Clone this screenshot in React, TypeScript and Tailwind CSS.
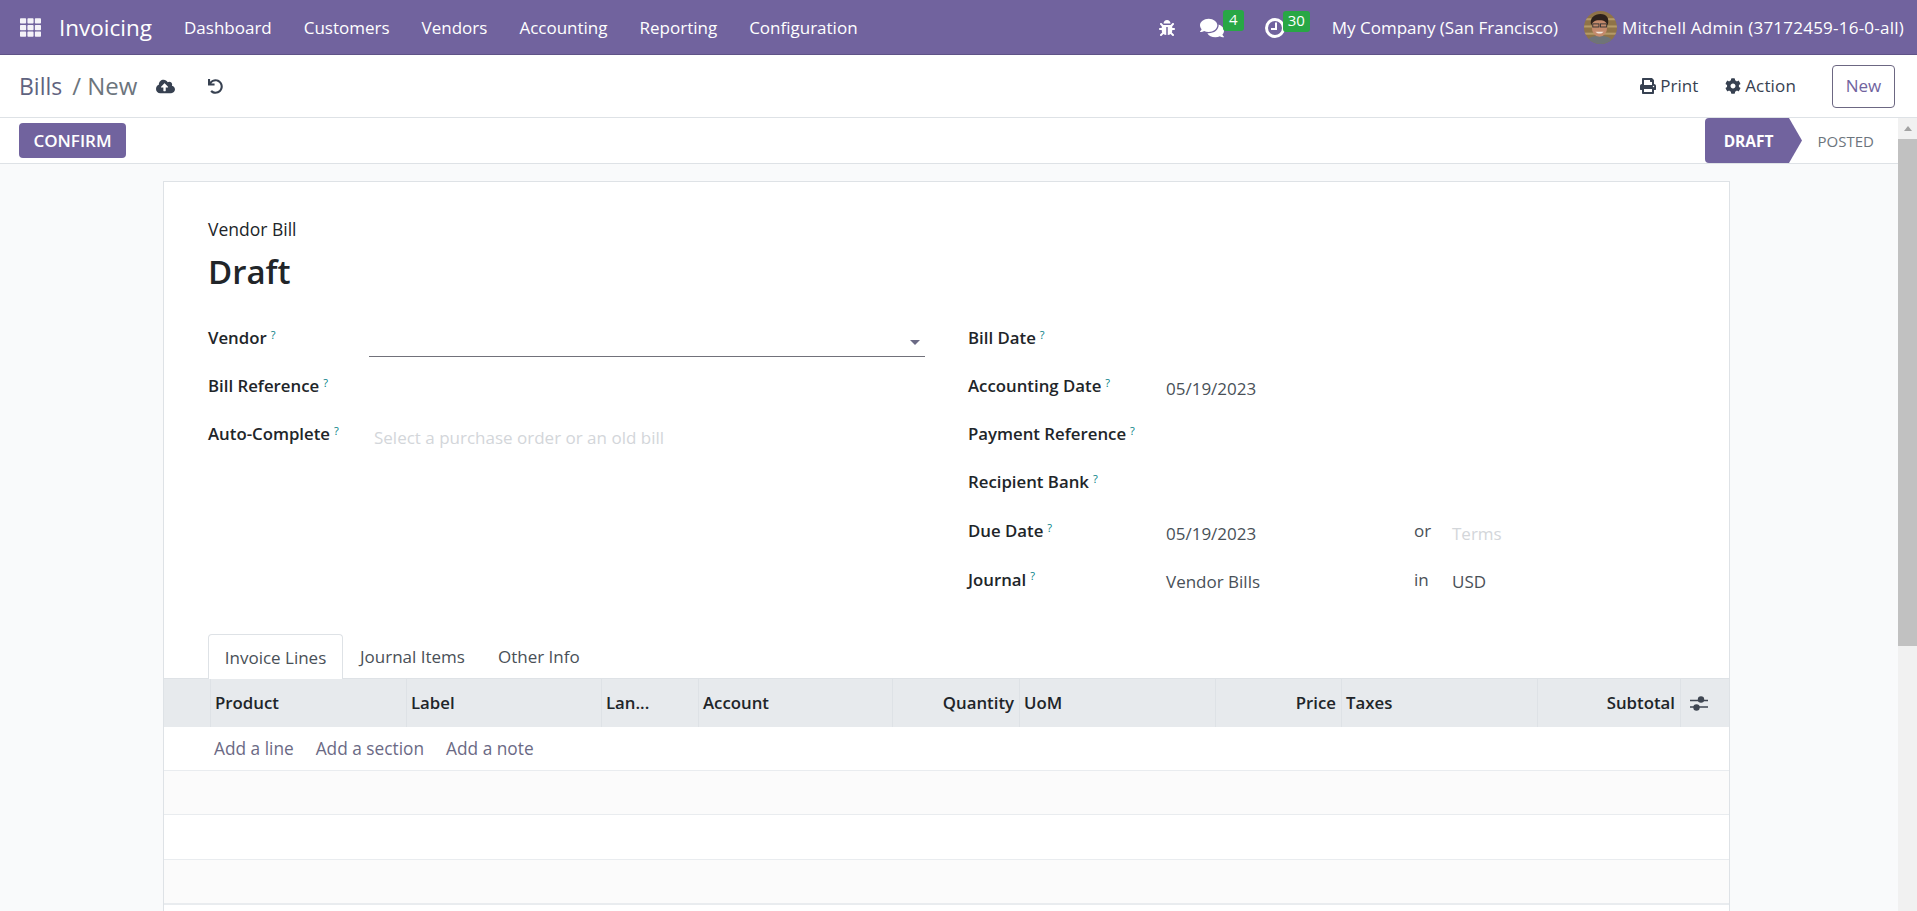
import { FaBug, FaCloudUploadAlt, FaCog, FaComments, FaPrint, FaTh, FaUndo } from "react-icons/fa";

const menu = ["Dashboard", "Customers", "Vendors", "Accounting", "Reporting", "Configuration"];

const columns = [
  ["", ""],
  ["Product", ""],
  ["Label", ""],
  ["Lan...", ""],
  ["Account", ""],
  ["Quantity", "r"],
  ["UoM", ""],
  ["Price", "r"],
  ["Taxes", ""],
  ["Subtotal", "r"],
];

function Avatar() {
  return (
    <svg viewBox="0 0 32 32" className="w-[33px] h-[33px] rounded-full shrink-0">
      <rect width="32" height="32" fill="#8f7347" />
      <rect x="0" y="7" width="32" height="2" fill="#b59a68" />
      <rect x="0" y="14" width="32" height="2" fill="#b59a68" />
      <rect x="0" y="21" width="32" height="2" fill="#b59a68" />
      <path d="M2 32c1-6 6-8 13-8s13 2 14 8z" fill="#6f7478" />
      <ellipse cx="15" cy="15.5" rx="7.5" ry="9.5" fill="#c48a6c" />
      <path d="M7 14C5 7 10 3 16 3s9 4 7 11c-1-3-3-5-8-5s-7 2-8 5z" fill="#2d211b" />
      <rect x="8.5" y="12.5" width="6" height="3" fill="none" stroke="#333" strokeWidth="0.9" />
      <rect x="16" y="12.5" width="6" height="3" fill="none" stroke="#333" strokeWidth="0.9" />
      <path d="M11 20c2.5 2.5 6 2.5 8 0z" fill="#f3e7df" />
    </svg>
  );
}

function Hint() {
  return <sup className="ml-[4px] text-[11px] font-normal text-[#017e84]">?</sup>;
}

function Label({ text, width }: { text: string; width: string }) {
  return (
    <div className={`${width} shrink-0 font-semibold text-[16.8px] text-[#212529]`}>
      {text}
      <Hint />
    </div>
  );
}

export default function App() {
  return (
    <div className="w-[1917px] h-[911px] overflow-hidden flex flex-col bg-[#f9fafb] font-['Open_Sans','Noto_Sans',sans-serif] text-[17px] leading-[24px] text-[#495057]">
      <header className="h-[55px] shrink-0 bg-[#71639e] border-b border-[#5f5387] flex items-center text-white">
        <FaTh className="ml-[20px] w-[21px] h-[21px] text-[#f4f2f8]" />
        <span className="ml-[18px] text-[22.5px] w-[125px] mt-[1px]">Invoicing</span>
        <nav className="flex gap-[32px] mt-[1px]">
          {menu.map((m) => (
            <span key={m}>{m}</span>
          ))}
        </nav>
        <div className="ml-auto flex items-center">
          <FaBug className="w-[16px] h-[16px] mt-[1px]" />
          <div className="relative ml-[25px] mr-[40px]">
            <FaComments className="w-[24px] h-[24px] mt-[2px]" />
            <span className="absolute left-[23px] -top-[4px] w-[21px] h-[21px] rounded-[3px] bg-[#28a745] text-[15px] font-medium leading-[19px] text-center">4</span>
          </div>
          <div className="relative mr-[46px]">
            <svg viewBox="0 0 22 22" className="w-[22px] h-[22px] mt-[2px]">
              <circle cx="11" cy="11" r="8.5" fill="none" stroke="currentColor" strokeWidth="3" />
              <path d="M12 5.5V12H7" fill="none" stroke="currentColor" strokeWidth="2" />
            </svg>
            <span className="absolute left-[19px] -top-[4px] w-[27px] h-[21px] rounded-[3px] bg-[#28a745] text-[15px] font-medium leading-[19px] text-center">30</span>
          </div>
          <span className="mt-[1px]">My Company (San Francisco)</span>
          <div className="ml-[26px] flex items-center gap-[5px] mr-[13px]">
            <Avatar />
            <span className="tracking-[0.23px] mt-[1px]">Mitchell Admin (37172459-16-0-all)</span>
          </div>
        </div>
      </header>

      <div className="h-[63px] shrink-0 bg-white border-b border-[#dee2e6] flex items-center pl-[19px] pr-[22px]">
        <span className="text-[23px] text-[#5f6380]">Bills</span>
        <span className="text-[24px] text-[#6c757d] ml-[10px]">/ New</span>
        <FaCloudUploadAlt className="ml-[19px] w-[19px] h-[19px] text-[#374151]" />
        <FaUndo className="ml-[33px] w-[15px] h-[15px] text-[#374151]" />
        <div className="ml-auto flex items-center text-[#374151]">
          <FaPrint className="w-[16px] h-[16px]" />
          <span className="ml-[4px]">Print</span>
          <FaCog className="ml-[27px] w-[16px] h-[16px]" />
          <span className="ml-[4px] tracking-[0.15px]">Action</span>
          <button className="ml-[36px] w-[63px] h-[43px] rounded-[4px] border border-[#6c6782] bg-white text-[#71639e]">New</button>
        </div>
      </div>

      <div className="flex-1 flex min-h-0">
        <div className="flex-1 min-w-0 flex flex-col">
          <div className="h-[46px] shrink-0 bg-white border-b border-[#dee2e6] flex items-center justify-between pl-[19px]">
            <button className="w-[107px] h-[35px] rounded-[4px] bg-[#71639e] text-white text-[17px] font-semibold">CONFIRM</button>
            <div className="flex items-center h-full self-start">
              <div className="relative h-[45px] w-[84px] pl-[4px] bg-[#71639e] rounded-l-[4px] flex items-center justify-center text-white text-[15.5px] font-bold">
                DRAFT
                <svg viewBox="0 0 13 45" className="absolute left-full top-0 w-[13px] h-[45px]" preserveAspectRatio="none">
                  <path d="M0 0L13 22.5L0 45z" fill="#71639e" />
                </svg>
              </div>
              <span className="ml-[29px] mr-[24px] text-[15px] font-medium text-[#6c757d]">POSTED</span>
            </div>
          </div>

          <main className="flex-1 min-h-0 overflow-hidden pt-[17px] pl-[163px] pr-[168px]">
            <section className="bg-white border border-[#dee2e6] border-b-0 h-[800px]">
              <div className="pt-[35px] pl-[44px] pr-[44px]">
                <div className="h-[24px] font-medium text-[17.5px] text-[#212529]">Vendor Bill</div>
                <h1 className="mt-[6px] h-[50px] text-[33px] leading-[50px] font-semibold text-[#212529]">Draft</h1>
                <div className="mt-[17px] flex">
                  <div className="w-[760px] shrink-0">
                    <div className="flex h-[48px] items-center">
                      <Label text="Vendor" width="w-[161px]" />
                      <div className="relative w-[556px] h-[34px] mt-[4px] border-b border-[#71717a]">
                        <span className="absolute right-[5px] top-[17px] w-0 h-0 border-x-[5px] border-x-transparent border-t-[5px] border-t-[#6b6a85]" />
                      </div>
                    </div>
                    <div className="flex h-[48px] items-center">
                      <Label text="Bill Reference" width="w-[161px]" />
                    </div>
                    <div className="flex h-[48px] items-center">
                      <Label text="Auto-Complete" width="w-[161px]" />
                      <span className="ml-[5px] mt-[7px] text-[#d3d6da]">Select a purchase order or an old bill</span>
                    </div>
                  </div>
                  <div className="flex-1">
                    <div className="flex h-[48px] items-center">
                      <Label text="Bill Date" width="w-[198px]" />
                    </div>
                    <div className="flex h-[48px] items-center">
                      <Label text="Accounting Date" width="w-[198px]" />
                      <span className="mt-[5px]">05/19/2023</span>
                    </div>
                    <div className="flex h-[48px] items-center">
                      <Label text="Payment Reference" width="w-[198px]" />
                    </div>
                    <div className="flex h-[48px] items-center">
                      <Label text="Recipient Bank" width="w-[198px]" />
                    </div>
                    <div className="flex h-[50px] items-center">
                      <Label text="Due Date" width="w-[198px]" />
                      <span className="w-[248px] mt-[6px]">05/19/2023</span>
                      <span className="w-[38px]">or</span>
                      <span className="mt-[6px] text-[#d3d6da]">Terms</span>
                    </div>
                    <div className="flex h-[47px] items-center">
                      <Label text="Journal" width="w-[198px]" />
                      <span className="w-[248px] mt-[4px]">Vendor Bills</span>
                      <span className="w-[38px]">in</span>
                      <span className="mt-[4px]">USD</span>
                    </div>
                  </div>
                </div>
              </div>

              <div className="mt-[31px] pl-[44px] flex h-[45px] relative z-10 -mb-px">
                <div className="w-[135px] h-[45px] pt-[1px] bg-white border border-[#dee2e6] border-b-0 rounded-t-[4px] flex items-center justify-center">Invoice Lines</div>
                <div className="px-[17px] pt-[1px] flex items-center">Journal Items</div>
                <div className="px-[16px] pt-[1px] flex items-center">Other Info</div>
              </div>

              <div className="grid grid-cols-[46px_196px_195px_97px_194px_127px_196px_126px_196px_143px_1fr] h-[49px] bg-[#e7eaed] border-t border-[#dee2e6] font-semibold text-[16.8px] text-[#212529]">
                {columns.map(([name, align], i) => (
                  <div key={i} className={`flex items-center ${i > 0 ? "border-l border-[#dee2e6]" : ""} ${align === "r" ? "justify-end pr-[5px]" : "pl-[4px]"}`}>
                    {name}
                  </div>
                ))}
                <div className="flex items-center justify-center border-l border-[#dee2e6] pr-[12px]">
                  <svg viewBox="0 0 18 15" className="w-[18px] h-[15px] text-[#3f4652]">
                    <path d="M0 4.5H18M0 11H18" stroke="currentColor" strokeWidth="1.6" />
                    <circle cx="11" cy="3.5" r="3.2" fill="currentColor" />
                    <circle cx="6.5" cy="11.5" r="3.2" fill="currentColor" />
                  </svg>
                </div>
              </div>

              <div className="h-[44px] bg-white border-b border-[#e9ecef] flex items-center gap-[22px] pl-[50px] text-[17.3px] text-[#6b6a85]">
                <span>Add a line</span>
                <span>Add a section</span>
                <span>Add a note</span>
              </div>
              <div className="h-[44px] bg-[#fbfbfb] border-b border-[#e9ecef]" />
              <div className="h-[45px] bg-white border-b border-[#e9ecef]" />
              <div className="h-[45px] bg-[#fbfbfb] border-b-2 border-[#e9ecef]" />
            </section>
          </main>
        </div>

        <div className="w-[19px] shrink-0 bg-[#f1f1f1] flex flex-col items-center">
          <div className="h-[21px] flex items-center justify-center">
            <span className="w-0 h-0 border-x-[4px] border-x-transparent border-b-[5px] border-b-[#a3a3a3]" />
          </div>
          <div className="w-full h-[507px] bg-[#c1c1c1]" />
        </div>
      </div>
    </div>
  );
}
